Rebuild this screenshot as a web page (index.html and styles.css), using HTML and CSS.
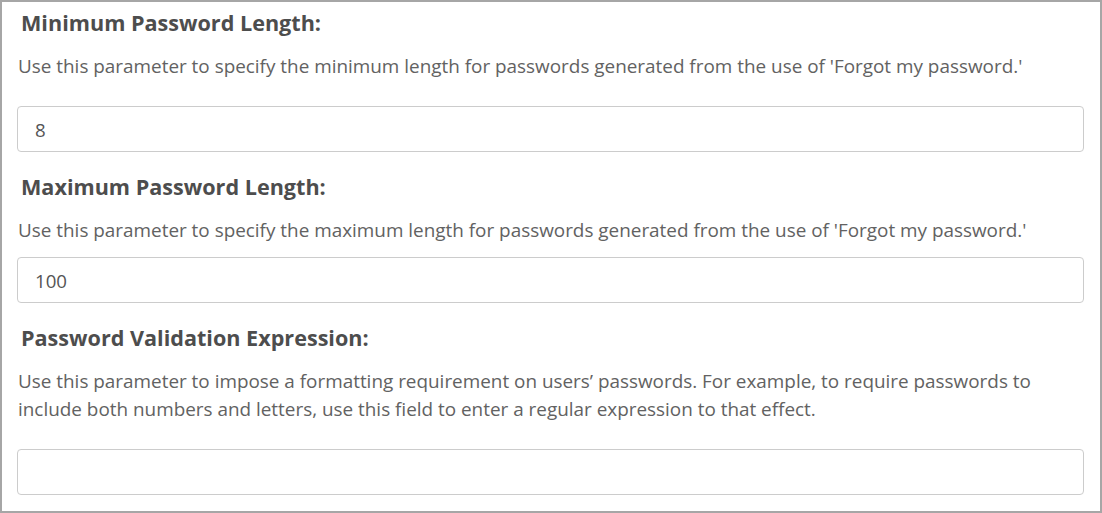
FILE: index.html
```html
<!DOCTYPE html>
<html lang="en">
<head>
<meta charset="utf-8">
<title>Password settings</title>
<link rel="stylesheet" href="styles.css">
</head>
<body>
<div class="panel">
  <section class="field">
    <h3 class="field-title">Minimum Password Length:</h3>
    <p class="field-desc spaced">Use this parameter to specify the minimum length for passwords generated from the use of 'Forgot my password.'</p>
    <input class="field-input" type="text" value="8">
  </section>
  <section class="field">
    <h3 class="field-title">Maximum Password Length:</h3>
    <p class="field-desc">Use this parameter to specify the maximum length for passwords generated from the use of 'Forgot my password.'</p>
    <input class="field-input" type="text" value="100">
  </section>
  <section class="field">
    <h3 class="field-title">Password Validation Expression:</h3>
    <p class="field-desc spaced">Use this parameter to impose a formatting requirement on users’ passwords. For example, to require passwords to include both numbers and letters, use this field to enter a regular expression to that effect.</p>
    <input class="field-input" type="text" value="">
  </section>
</div>
</body>
</html>
```

FILE: styles.css
```css
html, body {
  margin: 0;
  padding: 0;
  background: #ffffff;
}

.panel {
  box-sizing: border-box;
  width: 1102px;
  height: 513px;
  border: 2px solid #a6a6a6;
  padding: 7px 16px 0 15px;
  font-family: "Open Sans", "DejaVu Sans", sans-serif;
  overflow: hidden;
}

.field + .field {
  margin-top: 21px;
}

.field-title {
  margin: 0 0 15px;
  padding-left: 4px;
  font-size: 21.6px;
  line-height: 28px;
  font-weight: 700;
  color: #4d4d4d;
}

.field-desc {
  margin: 0 0 13px;
  padding-left: 1px;
  font-size: 18.9px;
  line-height: 28px;
  color: #626262;
}

.field-desc.spaced {
  margin-bottom: 26px;
}

.field-input {
  display: block;
  box-sizing: border-box;
  width: 100%;
  height: 46px;
  margin: 0;
  padding: 0 17px;
  border: 1px solid #cccccc;
  border-radius: 4px;
  background: #ffffff;
  font-family: "Open Sans", "DejaVu Sans", sans-serif;
  font-size: 18.7px;
  color: #555555;
  outline: none;
}
```
